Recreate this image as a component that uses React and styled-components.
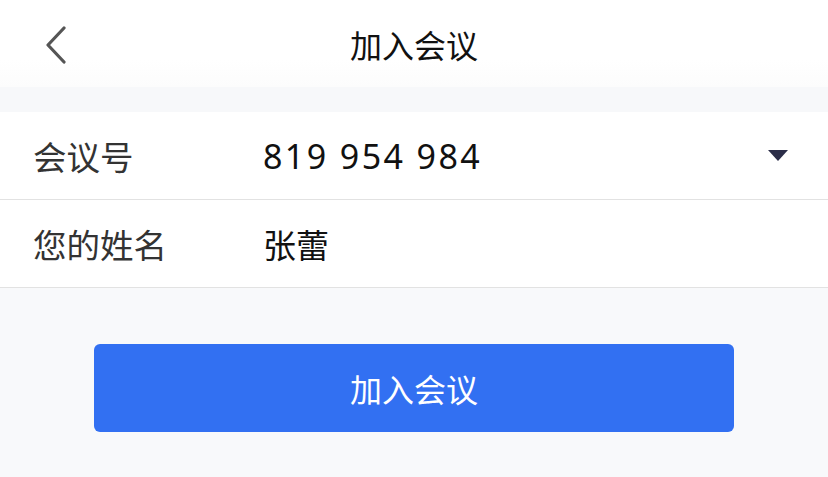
import styled, { createGlobalStyle } from "styled-components";

const GlobalStyle = createGlobalStyle`
  html, body {
    margin: 0;
    padding: 0;
    background: #f8f9fb;
    font-family: "Noto Sans CJK SC", "Noto Sans", sans-serif;
  }
`;

function App() {
  return (
    <Page>
      <GlobalStyle />
      <Header>
        <BackButton aria-label="返回">
          <svg width="24" height="38" viewBox="0 0 24 38">
            <path d="M20 2 L4 19 L20 36" fill="none" stroke="#555" strokeWidth="3.2" strokeLinecap="round" strokeLinejoin="round" />
          </svg>
        </BackButton>
        <Title>加入会议</Title>
      </Header>
      <Spacer />
      <Form>
        <Row>
          <Label>会议号</Label>
          <Value $number>819 954 984</Value>
          <Caret />
        </Row>
        <Row>
          <Label>您的姓名</Label>
          <Value>张蕾</Value>
        </Row>
      </Form>
      <Actions>
        <JoinButton>加入会议</JoinButton>
      </Actions>
    </Page>
  );
}

export default App;

const Page = styled.div`
  width: 828px;
  min-height: 477px;
  background: #f8f9fb;
`;

const Header = styled.div`
  position: relative;
  height: 87px;
  display: flex;
  align-items: flex-start;
  justify-content: center;
  background: linear-gradient(#ffffff 0, #ffffff 60px, #fcfcfc 87px);
`;

const BackButton = styled.div`
  position: absolute;
  left: 44px;
  top: 26px;
  width: 24px;
  height: 38px;
`;

const Title = styled.h1`
  margin: 0;
  padding-top: 22px;
  font-size: 32px;
  line-height: 44px;
  font-weight: 400;
  color: #111;
`;

const Spacer = styled.div`
  height: 25px;
  background: #f7f8fa;
`;

const Form = styled.div`
  background: #fff;
  border-bottom: 1px solid #e2e2e2;
`;

const Row = styled.div`
  height: 87px;
  display: flex;
  align-items: center;
  padding: 0 40px 0 33px;
  & + & {
    border-top: 1px solid #e2e2e2;
  }
`;

const Label = styled.div`
  width: 230px;
  font-size: 33.5px;
  color: #333;
`;

const Value = styled.div`
  flex: 1;
  font-family: ${(p) => (p.$number ? '"Noto Sans", "Noto Sans CJK SC", sans-serif' : '"Noto Sans CJK SC", sans-serif')};
  font-size: ${(p) => (p.$number ? "34px" : "33px")};
  letter-spacing: ${(p) => (p.$number ? "2.4px" : "0")};
  color: #111;
`;

const Caret = styled.div`
  width: 0;
  height: 0;
  border-left: 10px solid transparent;
  border-right: 10px solid transparent;
  border-top: 11px solid #2b2d48;
`;

const Actions = styled.div`
  padding: 56px 94px 45px;
`;

const JoinButton = styled.button`
  width: 100%;
  height: 88px;
  border: none;
  border-radius: 6px;
  background: #3270f2;
  color: #fff;
  font-family: "Noto Sans CJK SC", sans-serif;
  font-size: 32px;
  font-weight: 400;
`;
